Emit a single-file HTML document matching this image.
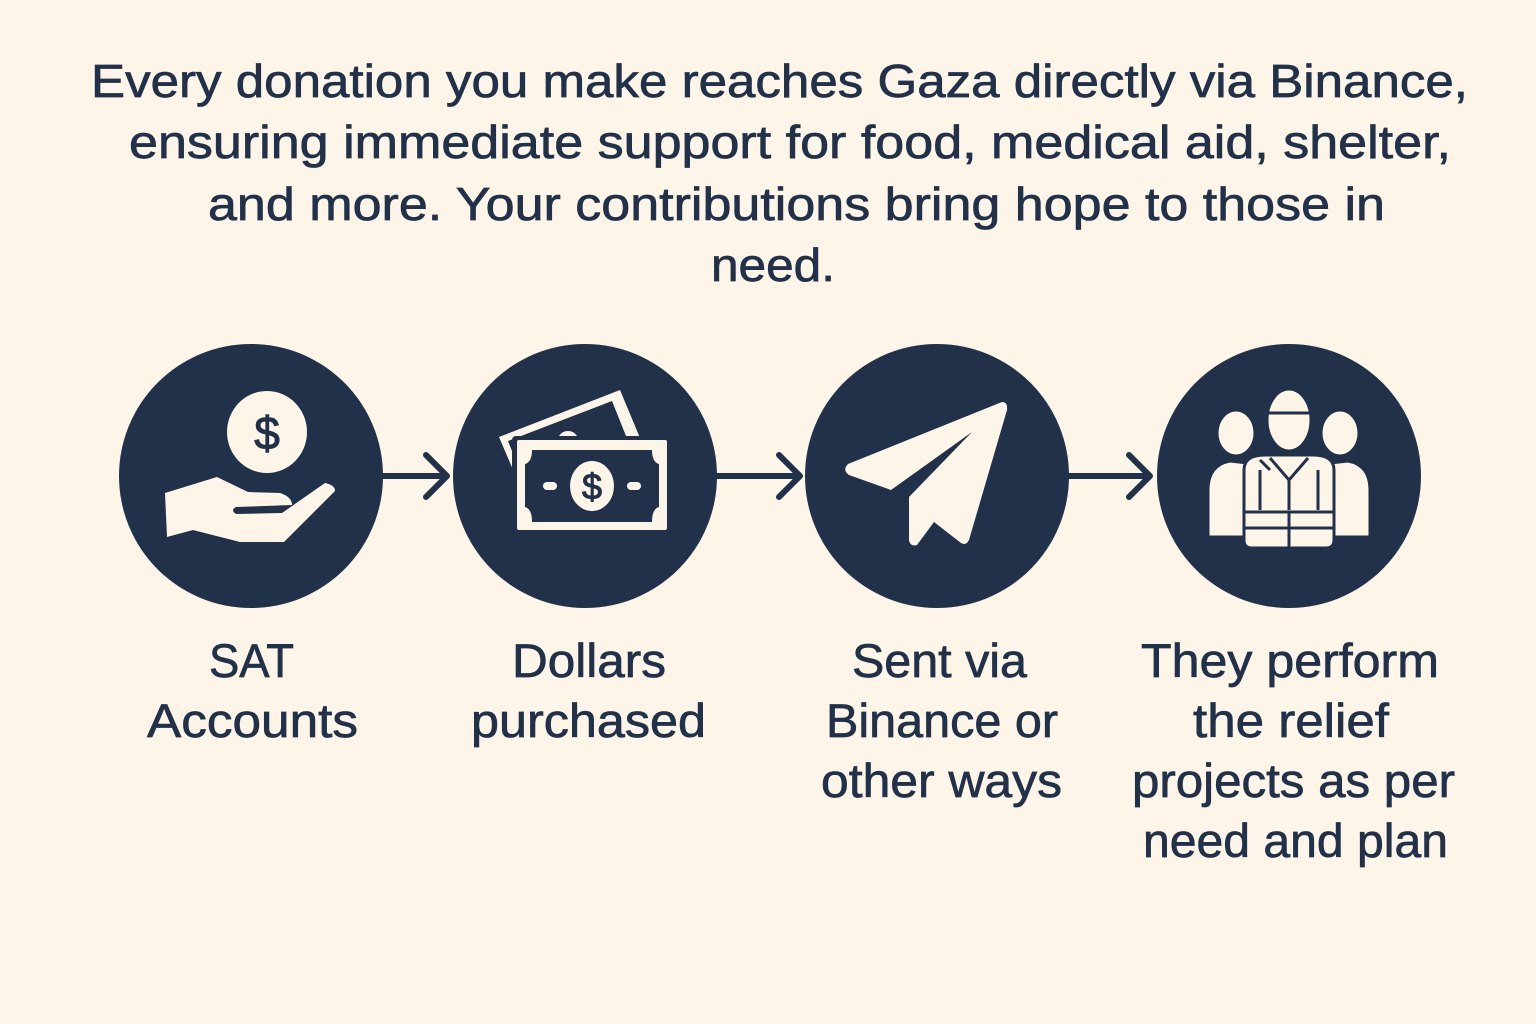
<!DOCTYPE html>
<html><head><meta charset="utf-8"><style>
html,body{margin:0;padding:0;background:#fdf6e8;}
svg{display:block}
text{font-family:"Liberation Sans",sans-serif;fill:#22314a;stroke:#22314a;stroke-width:0.7}
</style></head><body>
<svg width="1536" height="1024" viewBox="0 0 1536 1024" xmlns="http://www.w3.org/2000/svg">
<rect width="1536" height="1024" fill="#fdf6e8"/>
<g font-size="46">
<text x="91" y="97" textLength="1377" lengthAdjust="spacingAndGlyphs">Every donation you make reaches Gaza directly via Binance,</text>
<text x="129" y="158" textLength="1322" lengthAdjust="spacingAndGlyphs">ensuring immediate support for food, medical aid, shelter,</text>
<text x="208" y="220" textLength="1177" lengthAdjust="spacingAndGlyphs">and more. Your contributions bring hope to those in</text>
<text x="711" y="281" textLength="124" lengthAdjust="spacingAndGlyphs">need.</text>
</g>
<g fill="#22314a">
<circle cx="251" cy="476" r="132"/>
<circle cx="585" cy="476" r="132"/>
<circle cx="937" cy="476" r="132"/>
<circle cx="1289" cy="476" r="132"/>
</g>
<g stroke="#22314a" stroke-width="6" fill="none" stroke-linecap="round" stroke-linejoin="round">
<path d="M383 476H446M426 455L447 476L426 497"/>
<path d="M717 476H798M779 455L800 476L779 497"/>
<path d="M1069 476H1148M1129 455L1150 476L1129 497"/>
</g>
<g fill="#fdf6e8">
<ellipse cx="267" cy="432" rx="40" ry="41"/>
<path d="M165 493L217 477L248 492L280 493Q292 497 292 505L236 507Q230 510 236 514L282 513L325 483Q335 485 335 491L284 542L240 542L193 530L167 537Z"/>
</g>
<text x="267" y="449" font-size="46" text-anchor="middle" style="stroke-width:1">$</text>
<g>
<path d="M499 437L620 390L640 438L520 486Z" fill="#fdf6e8"/>
<path d="M508 441L612 401L626 436L522 476Z" fill="#22314a"/>
<path d="M558 440A10 9 0 0 1 578 440Z" fill="#fdf6e8"/>
<rect x="512" y="436" width="160" height="99" rx="4" fill="#22314a"/>
<rect x="517" y="440" width="150" height="90" rx="2" fill="#fdf6e8"/>
<path d="M532 450H652Q652 462 659 464V507Q652 509 652 522H532Q532 509 525 507V464Q532 462 532 450Z" fill="#22314a"/>
<ellipse cx="592" cy="486" rx="22" ry="25" fill="#fdf6e8"/>
<rect x="543" y="482" width="14" height="8" rx="4" fill="#fdf6e8"/>
<rect x="627" y="482" width="14" height="8" rx="4" fill="#fdf6e8"/>
</g>
<text x="592" y="499" font-size="36" text-anchor="middle" style="stroke-width:1">$</text>
<path d="M1002 402Q1008 402 1007 410L969 540Q966 546 961 543L934 522L917 545Q910 547 909 540V497L972 432L891 490L849 475Q842 470 848 464Z" fill="#fdf6e8"/>
<g fill="#fdf6e8" stroke="#22314a" stroke-width="3">
<ellipse cx="1236" cy="433" rx="19" ry="23"/>
<ellipse cx="1340" cy="433" rx="19" ry="23"/>
<path d="M1208 537V490Q1208 465 1230 461L1248 463V537Z"/>
<path d="M1370 537V490Q1370 465 1348 461L1330 463V537Z"/>
<ellipse cx="1289" cy="420" rx="22" ry="31"/>
<path d="M1267 413H1311"/>
<path d="M1244 540V470Q1244 455 1265 455H1313Q1334 455 1334 470V540Q1334 548 1326 548H1252Q1244 548 1244 540Z"/>
<path d="M1244 512H1334M1244 528H1334M1289 512V548M1260 460L1270 470M1289 480L1270 458M1289 480L1308 458M1289 480V510M1260 470V510M1318 470V510"/>
</g>
<g font-size="47">
<text x="209" y="677" textLength="85" lengthAdjust="spacingAndGlyphs">SAT</text>
<text x="147" y="737" textLength="211" lengthAdjust="spacingAndGlyphs">Accounts</text>
<text x="512" y="677" textLength="154" lengthAdjust="spacingAndGlyphs">Dollars</text>
<text x="471" y="737" textLength="235" lengthAdjust="spacingAndGlyphs">purchased</text>
<text x="852" y="677" textLength="175" lengthAdjust="spacingAndGlyphs">Sent via</text>
<text x="826" y="737" textLength="232" lengthAdjust="spacingAndGlyphs">Binance or</text>
<text x="821" y="797" textLength="241" lengthAdjust="spacingAndGlyphs">other ways</text>
<text x="1141" y="677" textLength="298" lengthAdjust="spacingAndGlyphs">They perform</text>
<text x="1193" y="737" textLength="196" lengthAdjust="spacingAndGlyphs">the relief</text>
<text x="1132" y="797" textLength="323" lengthAdjust="spacingAndGlyphs">projects as per</text>
<text x="1143" y="857" textLength="305" lengthAdjust="spacingAndGlyphs">need and plan</text>
</g>
</svg>
</body></html>
